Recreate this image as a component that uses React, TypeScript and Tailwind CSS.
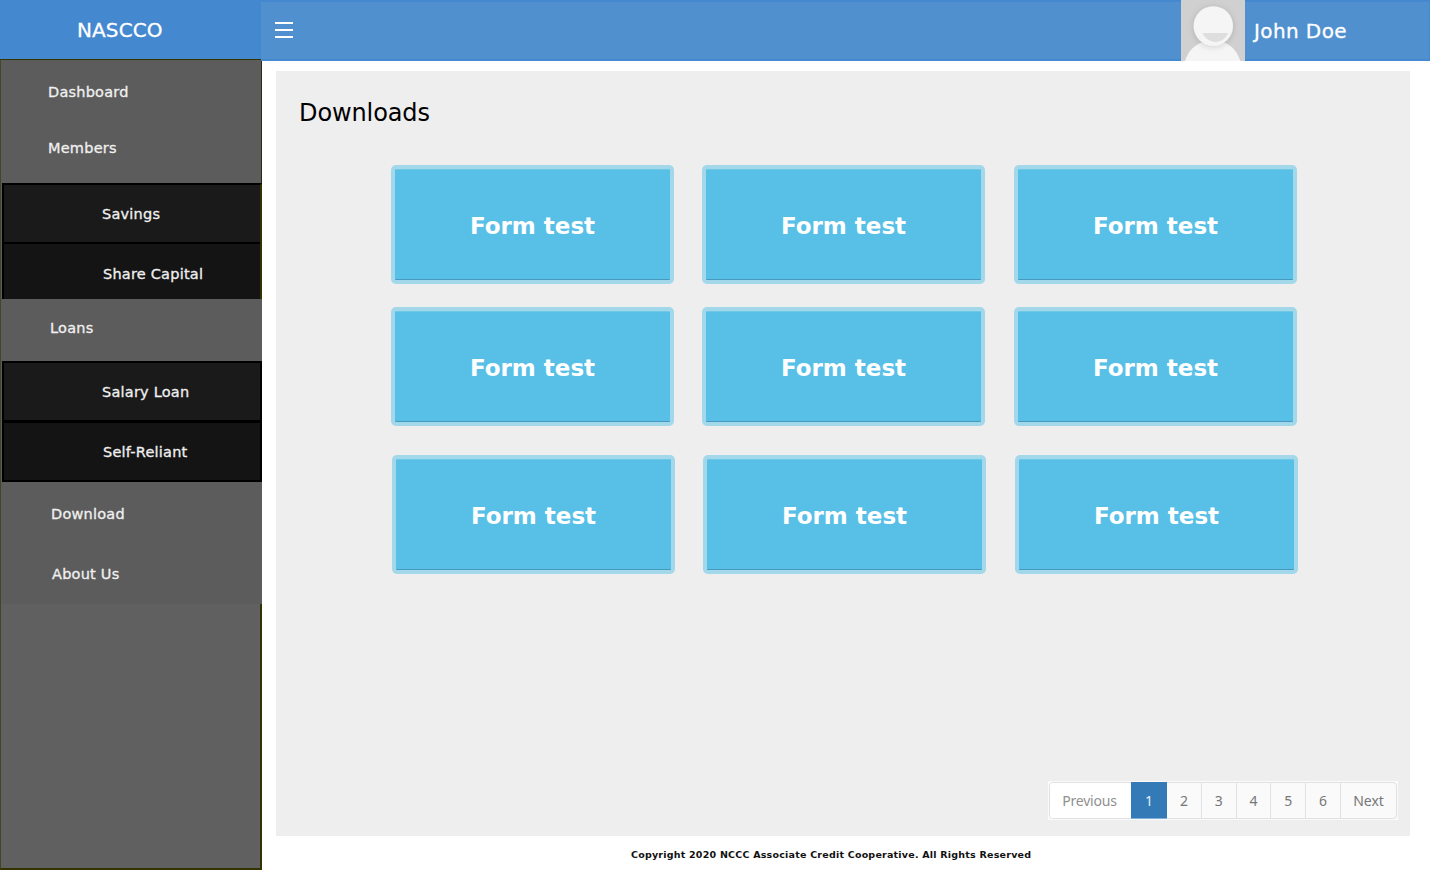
import React from "react";

const cardRows = [
  "pl-[115px]",
  "pl-[115px] mt-[23px]",
  "pl-[116px] mt-[29px]",
];

function Label({ children, className = "" }: { children: React.ReactNode; className?: string }) {
  return (
    <span className={`whitespace-nowrap text-[14.500px] leading-none tracking-[0.220px] text-[#f0f0f0] [-webkit-text-stroke:0.3px_#f0f0f0] ${className}`}>
      {children}
    </span>
  );
}

function Sidebar() {
  return (
    <aside className="flex h-[870px] w-[262px] shrink-0 flex-col">
      <div className="flex h-[59px] w-[261px] items-center bg-[#4488cf] pl-[77px] pt-px">
        <span className="text-[20px] leading-none tracking-[0.1px] text-white [-webkit-text-stroke:0.3px_white]">NASCCO</span>
      </div>
      <nav className="flex flex-1 flex-col border-b-2 border-l border-t border-[#333300] border-l-[#454526] bg-[#5c5c5c]">
        <div className="h-[123px] border-r border-[#282815] pl-[47px]">
          <div className="flex h-[64px] items-center"><Label>Dashboard</Label></div>
          <div className="flex h-[48px] items-center"><Label>Members</Label></div>
        </div>
        <div className="ml-px h-[116px] border-l-2 border-r-2 border-t-2 border-black border-r-[#333300]">
          <div className="flex h-[57px] items-center bg-[#1a1a1a] pl-[98px] pt-px"><Label>Savings</Label></div>
          <div className="flex h-[57px] items-center border-t-2 border-black bg-[#141414] pl-[99px] pt-[5px]"><Label>Share Capital</Label></div>
        </div>
        <div className="flex h-[62px] items-center pb-1 pl-[49px]"><Label>Loans</Label></div>
        <div className="ml-px h-[121px] border-2 border-black">
          <div className="flex h-[57px] items-center bg-[#1a1a1a] pl-[98px] pt-px"><Label>Salary Loan</Label></div>
          <div className="flex h-[60px] items-center border-t-[3px] border-black bg-[#141414] pl-[99px] pt-px"><Label>Self-Reliant</Label></div>
        </div>
        <div className="flex h-[64px] items-center pl-[50px]"><Label>Download</Label></div>
        <div className="flex h-[58px] items-center pb-0.5 pl-[51px]"><Label>About Us</Label></div>
        <div className="flex-1 border-r-2 border-[#333300] bg-[#606060]" />
      </nav>
    </aside>
  );
}

function Avatar() {
  return (
    <svg className="h-[61px] w-16" viewBox="0 0 64 61">
      <defs>
        <filter id="shade" x="-30%" y="-30%" width="160%" height="160%">
          <feDropShadow dx="0" dy="1" stdDeviation="3" floodColor="#000" floodOpacity="0.16" />
        </filter>
      </defs>
      <rect width="64" height="61" fill="#d0d0d0" />
      <path d="M4 61C8 48 18 40.500 32 40.500S55 48 59.500 61Z" fill="#f5f5f5" />
      <circle cx="32.300" cy="26" r="19.700" fill="#f5f5f5" filter="url(#shade)" />
      <path d="M21.500 33H47C45 38.500 40 42 34.500 42S24 38.500 21.500 33Z" fill="#dedede" />
    </svg>
  );
}

function Header() {
  return (
    <header className="-ml-px flex h-[61px] border-b-2 border-t-2 border-[#4488cf] bg-[#5090cf]">
      <div className="ml-[14px] mt-5 flex h-4 w-[18px] flex-col justify-between">
        <span className="h-0.5 bg-white" />
        <span className="h-0.5 bg-white" />
        <span className="h-0.5 bg-white" />
      </div>
      <div className="-mt-0.5 ml-auto mr-[9px] h-[61px]"><Avatar /></div>
      <div className="flex w-[176px] items-center border-r border-[#4488cf]">
        <span className="text-[20px] leading-none tracking-[0.4px] text-white [-webkit-text-stroke:0.3px_white]">John Doe</span>
      </div>
    </header>
  );
}

function Pagination() {
  return (
    <div className="flex h-[39px] w-[350px] border border-[#fafafa] bg-[#fafafa] font-['Noto_Sans',sans-serif] text-[14px] text-[#777]">
      <div className="flex h-[37px] w-full rounded-[4px] border border-[#e1e1e1]">
        <span className="flex w-[81px] items-center justify-center rounded-l-[3px] bg-white pr-[2px] tracking-[-0.2px] text-[#909090]">Previous</span>
        <span className="-my-px flex w-9 items-center justify-center border-b border-[#7fb0d8] bg-[#337ab7] text-[#e8f1f8]">1</span>
        {[2, 3, 4, 5, 6].map((n) => (
          <span key={n} className="flex w-[34.800px] items-center justify-center border-r border-[#e1e1e1]">{n}</span>
        ))}
        <span className="flex flex-1 items-center justify-center">Next</span>
      </div>
    </div>
  );
}

export default function App() {
  return (
    <div className="flex h-[871px] w-[1430px] overflow-hidden bg-white font-['DejaVu_Sans',Verdana,sans-serif]">
      <Sidebar />
      <div className="flex min-w-0 flex-1 flex-col">
        <Header />
        <main className="ml-[14px] mt-[10px] flex h-[765px] w-[1134px] flex-col bg-[#eeeeee]">
          <h1 className="pl-[23px] pt-[28px] text-[24px] leading-[28px] tracking-[-0.1px] text-black">Downloads</h1>
          <div className="mt-[38px] flex flex-col">
            {cardRows.map((row, r) => (
              <div key={r} className={`flex ${row}`}>
                {[0, 1, 2].map((c) => (
                  <div
                    key={c}
                    className={`h-[119px] w-[283px] rounded-[5px] bg-[#a2d8ea] p-1 ${c === 1 ? "ml-[28px]" : c === 2 ? "ml-[29px]" : ""}`}
                  >
                    <div className="flex h-[111px] items-center justify-center rounded-[1px] border-b border-t border-b-[#4799bd] border-t-[#70c8e7] bg-[#58bfe7] pt-[3px] text-[23px] font-bold leading-none text-white">
                      Form test
                    </div>
                  </div>
                ))}
              </div>
            ))}
          </div>
          <div className="mb-[16px] mr-[12px] mt-auto flex justify-end">
            <Pagination />
          </div>
        </main>
        <footer className="pl-[369px] pt-[12px] text-[9.500px] font-bold leading-[14px] tracking-[0.220px] text-[#111]">
          Copyright 2020 NCCC Associate Credit Cooperative. All Rights Reserved
        </footer>
      </div>
    </div>
  );
}
